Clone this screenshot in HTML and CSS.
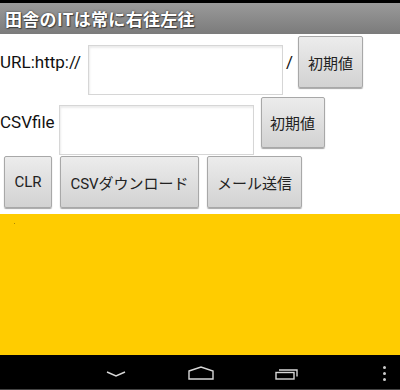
FILE: index.html
```html
<!DOCTYPE html>
<html lang="ja">
<head>
<meta charset="utf-8">
<link rel="stylesheet" href="styles.css">
</head>
<body>
<div class="screen">
  <div class="status"></div>
  <div class="titlebar">田舎のITは常に右往左往</div>
  <div class="form">
    <div class="row row-url">
      <span class="label">URL:http://</span>
      <div class="field field-url"></div>
      <span class="slash">/</span>
      <button class="btn btn-init">初期値</button>
    </div>
    <div class="row row-csv">
      <span class="label">CSVfile</span>
      <div class="field field-csv"></div>
      <button class="btn btn-init">初期値</button>
    </div>
    <div class="row row-actions">
      <button class="btn btn-clr">CLR</button>
      <button class="btn btn-dl">CSVダウンロード</button>
      <button class="btn btn-mail">メール送信</button>
    </div>
  </div>
  <div class="yellow"><span class="dot"></span></div>
  <div class="navbar">
    <svg class="nav-back" width="20" height="6" viewBox="0 0 20 6"><path d="M1 1 L10 5 L19 1" fill="none" stroke="#d8d8d8" stroke-width="1.4"/></svg>
    <svg class="nav-home" width="26" height="14" viewBox="0 0 26 14"><path d="M1 5 L13 1 L25 5 L25 13 L1 13 Z" fill="none" stroke="#d8d8d8" stroke-width="1.4"/></svg>
    <svg class="nav-recent" width="24" height="13" viewBox="0 0 24 13"><rect x="1" y="5.5" width="18" height="6.5" fill="none" stroke="#d8d8d8" stroke-width="1.4"/><path d="M4 3 L22 3 L22 9.5" fill="none" stroke="#d8d8d8" stroke-width="1.4"/></svg>
    <span class="nav-menu"><i></i><i></i><i></i></span>
  </div>
</div>
</body>
</html>
```
FILE: styles.css
```css
* { box-sizing: border-box; }
html, body { margin: 0; padding: 0; background: #fff; }
body { font-family: Roboto, "Noto Sans CJK JP", sans-serif; }
.screen { width: 400px; height: 390px; display: flex; flex-direction: column; overflow: hidden; }
.status { height: 3px; background: #000; }
.titlebar {
  height: 31px;
  background: linear-gradient(#9a9a9a, #7b7b7b);
  color: #fff;
  font-family: "Noto Sans CJK JP", sans-serif;
  font-weight: bold;
  font-size: 17px;
  line-height: 31px;
  padding-left: 5px;
  letter-spacing: 0.3px;
  text-shadow: 0 0 2px #333, 1px 1px 1px #444;
}
.form { padding-top: 2px; display: flex; flex-direction: column; gap: 8px; }
.row { display: flex; align-items: flex-start; height: 52px; }
.label { font-size: 17px; color: #111; line-height: 20px; }
.row-url .label { margin-top: 16px; margin-left: 0; }
.row-csv .label { margin-top: 16px; }
.field {
  width: 195px;
  height: 50px;
  background: #fff;
  border: 1px solid #d6d6d6;
  box-shadow: inset 1px 2px 2px rgba(0,0,0,0.08);
}
.field-url { margin-left: 7px; margin-top: 9px; }
.field-csv { margin-left: 4px; margin-top: 9px; height: 50px; }
.slash { font-size: 17px; line-height: 20px; margin-top: 16px; margin-left: 3px; color: #111; }
.btn {
  height: 52px;
  border: 1px solid #a8a8a8;
  border-radius: 2px;
  background: linear-gradient(#ececec, #d2d2d2);
  box-shadow: 0 1px 1px rgba(0,0,0,0.35);
  color: #222;
  font-family: Roboto, "Noto Sans CJK JP", sans-serif;
  font-size: 15px;
  padding: 0;
}
.row-url .btn-init { width: 65px; margin-left: 5px; }
.row-csv .btn-init { width: 64px; margin-left: 7px; margin-top: 1px; height: 51px; }
.row-actions { gap: 8px; padding-left: 4px; }
.btn-clr { width: 48px; font-size: 15px; }
.btn-dl { width: 139px; }
.btn-mail { width: 95px; }
.yellow { height: 141px; margin-top: 6px; background: #ffcc00; position: relative; }
.dot { position: absolute; left: 14px; top: 9px; width: 1px; height: 1px; background: #b08a00; }
.navbar {
  flex: 1;
  background: #000;
  border-bottom: 1px solid #444;
  display: flex;
  align-items: center;
  position: relative;
}
.nav-back { margin-left: 106px; margin-top: 4px; }
.nav-home { margin-left: 62px; margin-top: 2px; }
.nav-recent { margin-left: 61px; margin-top: 2px; }
.nav-menu { margin-left: 84px; display: flex; flex-direction: column; gap: 3px; margin-top: 2px; }
.nav-menu i { display: block; width: 3px; height: 3px; background: #ccc; border-radius: 50%; }
```
